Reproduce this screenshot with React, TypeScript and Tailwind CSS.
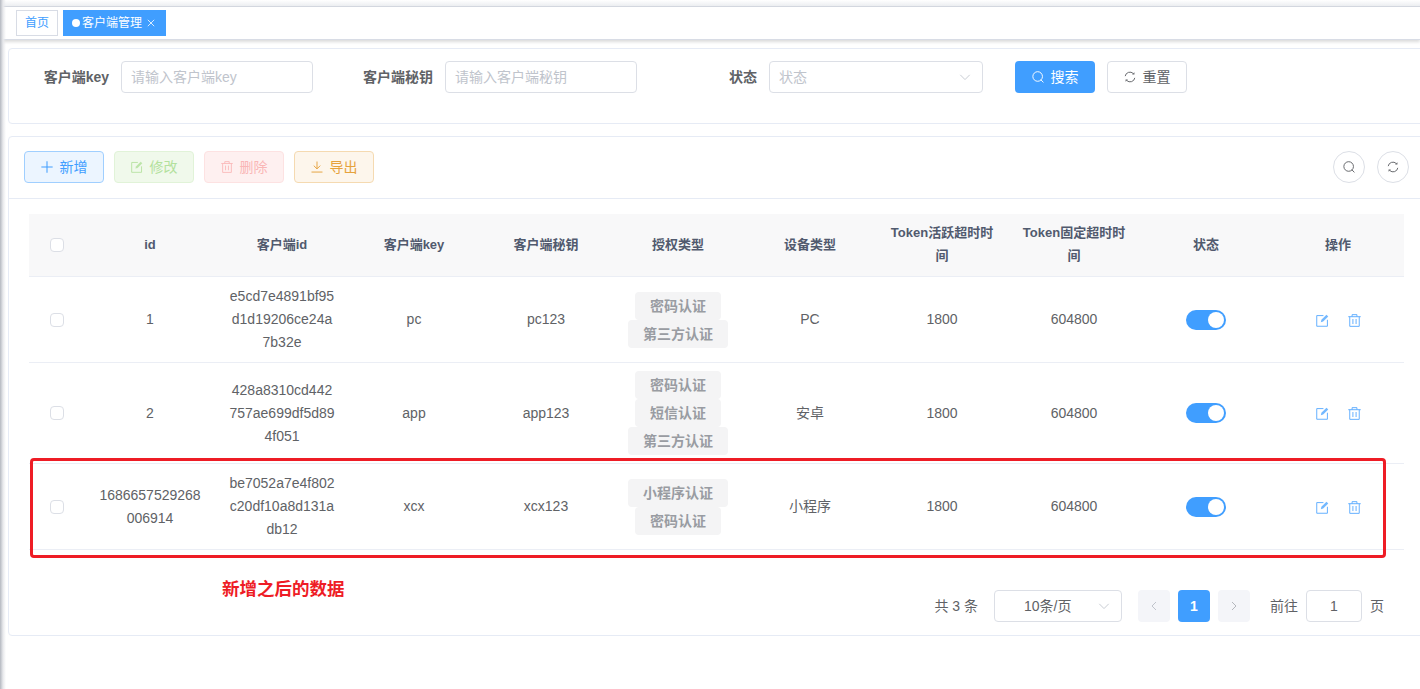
import React from "react";

const FONT = "font-['Liberation_Sans','Noto_Sans_CJK_SC',sans-serif]";

const SearchIcon = ({ className = "" }: { className?: string }) => (
  <svg viewBox="0 0 14 14" className={className} fill="none" stroke="currentColor" strokeWidth="1.1">
    <circle cx="6.6" cy="6.4" r="5.6" />
    <path d="M10.6 10.5 13 13" strokeLinecap="round" />
  </svg>
);
const RefreshIcon = ({ className = "" }: { className?: string }) => (
  <svg viewBox="0 0 14 14" className={className} fill="none" stroke="currentColor" strokeWidth="1.1">
    <path d="M1.4 6A5.6 5.6 0 0 1 10.8 2.9" />
    <path d="M12.6 8A5.6 5.6 0 0 1 3.2 11.1" />
    <path d="M12.2 1.4V4.2H9.4" fill="currentColor" stroke="none" />
    <path d="M1.8 12.6V9.8H4.6" fill="currentColor" stroke="none" />
  </svg>
);
const PlusIcon = ({ className = "" }: { className?: string }) => (
  <svg viewBox="0 0 14 14" className={className} fill="none" stroke="currentColor" strokeWidth="1.2">
    <path d="M7 .4V13.6M.4 7H13.6" />
  </svg>
);
const EditIcon = ({ className = "" }: { className?: string }) => (
  <svg viewBox="0 0 14 14" className={className} fill="none" stroke="currentColor" strokeWidth="1">
    <path d="M8 1.7H.8V13.2H12.3V6.2" />
    <path d="M5.2 8.8 5.8 6.3 11.3.8 13.2 2.7 7.7 8.2Z" fill="currentColor" stroke="none" opacity="0.85" />
  </svg>
);
const TrashIcon = ({ className = "" }: { className?: string }) => (
  <svg viewBox="0 0 14 14" className={className} fill="none" stroke="currentColor" strokeWidth="1">
    <path d="M.3 2.9H13.7" />
    <path d="M4.4 2.9V.7H9.6V2.9" />
    <path d="M1.9 2.9V13.3H12.1V2.9" />
    <path d="M5.3 5.4V10.8M8.7 5.4V10.8" />
  </svg>
);
const DownloadIcon = ({ className = "" }: { className?: string }) => (
  <svg viewBox="0 0 14 14" className={className} fill="none" stroke="currentColor" strokeWidth="1.1">
    <path d="M7 .6V9M3.2 5.4 7 9.2 10.8 5.4" />
    <path d="M.6 12.9H13.4" />
  </svg>
);
const Chevron = ({ className = "" }: { className?: string }) => (
  <svg viewBox="0 0 14 14" className={className} fill="none" stroke="currentColor" strokeWidth="1">
    <path d="M1.5 4.5 7 10 12.5 4.5" />
  </svg>
);

const Field = ({ label, labelW, inputW, placeholder, select }: { label: string; labelW: string; inputW: string; placeholder: string; select?: boolean }) => (
  <div className="flex items-center h-8">
    <div className={`${labelW} pr-3 text-right text-sm font-bold text-[#606266]`}>{label}</div>
    <div className={`${inputW} h-8 box-border border border-[#dcdfe6] rounded flex items-center justify-between pl-[9px] pr-[11px] text-sm text-[#c0c4cc]`}>
      <span>{placeholder}</span>
      {select && <Chevron className="w-3 h-3 text-[#c0c4cc]" />}
    </div>
  </div>
);

const ToolBtn = ({ label, icon, cls }: { label: string; icon: React.ReactNode; cls: string }) => (
  <div className={`w-20 h-8 box-border border rounded flex items-center justify-center gap-[7px] text-sm ${cls}`}>
    {icon}
    <span>{label}</span>
  </div>
);

const Tag = ({ t }: { t: string }) => (
  <div className="h-7 leading-7 px-[15px] rounded bg-[#f4f4f5] text-[#999ca2] text-sm font-bold w-fit mx-auto">{t}</div>
);

const Check = () => <div className="w-3.5 h-3.5 box-border border border-[#dcdfe6] rounded-sm bg-white mx-auto" />;

const rows = [
  { id: ["1"], cid: ["e5cd7e4891bf95", "d1d19206ce24a", "7b32e"], key: "pc", sec: "pc123", tags: ["密码认证", "第三方认证"], dev: "PC" },
  { id: ["2"], cid: ["428a8310cd442", "757ae699df5d89", "4f051"], key: "app", sec: "app123", tags: ["密码认证", "短信认证", "第三方认证"], dev: "安卓" },
  { id: ["1686657529268", "006914"], cid: ["be7052a7e4f802", "c20df10a8d131a", "db12"], key: "xcx", sec: "xcx123", tags: ["小程序认证", "密码认证"], dev: "小程序" },
];

const th = "text-center text-[13px] font-bold text-[#515a6e] leading-[23px] px-[10px] pt-[7px] pb-[9px] border-b border-[#ebeef5]";
const thCheck = "text-center leading-[23px] px-[10px] py-2 border-b border-[#ebeef5]";
const td = "text-center text-sm text-[#606266] leading-[23px] px-[10px] py-2 border-b border-[#ebeef5]";

export default function App() {
  return (
    <div className={`${FONT} relative w-[1420px] h-[689px] overflow-hidden bg-white`}>
      <div className="h-[7px] border-b border-[#d4d8e0] box-border bg-gradient-to-b from-white to-[#eceef1]" />
      <div className="h-[33px] box-border border-b border-[#d8dce5] shadow-[0_2px_3px_rgba(0,0,0,0.14)] flex items-center gap-[5px] pl-4 pb-px">
        <div className="w-[42px] h-[26px] box-border border border-[#d8dce5] flex items-center justify-center text-xs text-[#409eff]">首页</div>
        <div className="w-[103px] h-[26px] bg-[#409eff] flex items-center pl-[9px] text-xs text-white">
          <span className="w-2 h-2 rounded-full bg-white mr-[2px]" />
          <span>客户端管理</span>
          <svg viewBox="0 0 10 10" className="w-2 h-2 ml-[5px]" fill="none" stroke="currentColor" strokeWidth="1"><path d="M1 1 9 9M9 1 1 9" /></svg>
        </div>
      </div>

      <div className="w-[1417px] ml-2 mt-2 h-[76px] box-border border border-[#e6ebf5] rounded pt-3 pl-5">
        <div className="flex items-center">
          <Field label="客户端key" labelW="w-[92px]" inputW="w-[192px]" placeholder="请输入客户端key" />
          <Field label="客户端秘钥" labelW="w-[132px]" inputW="w-[192px]" placeholder="请输入客户端秘钥" />
          <Field label="状态" labelW="w-[132px]" inputW="w-[214px]" placeholder="状态" select />
          <div className="ml-8 w-20 h-8 rounded bg-[#409eff] flex items-center justify-center gap-[7px] text-sm text-white">
            <SearchIcon className="w-3 h-3" />
            <span>搜索</span>
          </div>
          <div className="ml-3 w-20 h-8 box-border border border-[#dcdfe6] rounded flex items-center justify-center gap-[7px] text-sm text-[#606266]">
            <RefreshIcon className="w-3 h-3" />
            <span>重置</span>
          </div>
        </div>
      </div>

      <div className="w-[1417px] ml-2 mt-3 h-[500px] box-border border border-[#e6ebf5] rounded">
        <div className="h-[62px] box-border border-b border-[#e6ebf5] pl-[15px] pr-[15px] pt-[14px] flex items-start justify-between">
          <div className="flex gap-2.5">
            <ToolBtn label="新增" icon={<PlusIcon className="w-3 h-3" />} cls="bg-[#ecf5ff] border-[#a0cfff] text-[#409eff]" />
            <ToolBtn label="修改" icon={<EditIcon className="w-3 h-3" />} cls="bg-[#f0f9eb] border-[#e1f3d8] text-[#b3e19d]" />
            <ToolBtn label="删除" icon={<TrashIcon className="w-3 h-3" />} cls="bg-[#fef0f0] border-[#fde2e2] text-[#fab6b6]" />
            <ToolBtn label="导出" icon={<DownloadIcon className="w-3 h-3" />} cls="bg-[#fdf6ec] border-[#f5dab1] text-[#e6a23c]" />
          </div>
          <div className="flex gap-3">
            <div className="w-8 h-8 box-border border border-[#dcdfe6] rounded-full flex items-center justify-center text-[#606266]"><SearchIcon className="w-3 h-3" /></div>
            <div className="w-8 h-8 box-border border border-[#dcdfe6] rounded-full flex items-center justify-center text-[#606266]"><RefreshIcon className="w-3 h-3" /></div>
          </div>
        </div>

        <div className="pl-5 pt-[15px]">
          <table className="w-[1375px] table-fixed border-collapse">
            <colgroup>
              <col className="w-[55px]" />
              {Array.from({ length: 10 }).map((_, i) => <col key={i} className="w-[132px]" />)}
            </colgroup>
            <thead>
              <tr className="bg-[#f8f8f9]">
                <th className={thCheck}><Check /></th>
                {["id", "客户端id", "客户端key", "客户端秘钥", "授权类型", "设备类型", "Token活跃超时时间", "Token固定超时时间", "状态", "操作"].map((h) => (
                  <th key={h} className={th}>{h}</th>
                ))}
              </tr>
            </thead>
            <tbody>
              {rows.map((r) => (
                <tr key={r.key}>
                  <td className={td}><Check /></td>
                  <td className={td}>{r.id.map((s) => <div key={s}>{s}</div>)}</td>
                  <td className={td}>{r.cid.map((s) => <div key={s}>{s}</div>)}</td>
                  <td className={td}>{r.key}</td>
                  <td className={td}>{r.sec}</td>
                  <td className={td}>{r.tags.map((t) => <Tag key={t} t={t} />)}</td>
                  <td className={td}>{r.dev}</td>
                  <td className={td}>1800</td>
                  <td className={td}>604800</td>
                  <td className={td}>
                    <div className="w-10 h-5 rounded-full bg-[#409eff] mx-auto flex items-center justify-end pr-0.5">
                      <span className="w-4 h-4 rounded-full bg-white" />
                    </div>
                  </td>
                  <td className={td}>
                    <div className="flex justify-center gap-[19px] text-[#5aabff] pt-px">
                      <EditIcon className="w-[13px] h-[13px]" />
                      <TrashIcon className="w-[13px] h-[13px]" />
                    </div>
                  </td>
                </tr>
              ))}
            </tbody>
          </table>

          <div className="w-[1375px] mt-10 flex items-center justify-end pr-5 text-sm text-[#606266]">
            <span className="mr-4">共 3 条</span>
            <div className="w-32 h-8 box-border border border-[#dcdfe6] rounded flex items-center pl-[29px] pr-[11px] justify-between">
              <span>10条/页</span>
              <Chevron className="w-3 h-3 text-[#c0c4cc]" />
            </div>
            <div className="ml-4 w-8 h-8 rounded-sm bg-[#f4f5f9] flex items-center justify-center text-[#c0c4cc]">
              <svg viewBox="0 0 10 10" className="w-2.5 h-2.5" fill="none" stroke="currentColor"><path d="M7 1 3 5 7 9" /></svg>
            </div>
            <div className="ml-2 w-8 h-8 rounded-sm bg-[#409eff] flex items-center justify-center text-white font-bold">1</div>
            <div className="ml-2 w-8 h-8 rounded-sm bg-[#f4f5f9] flex items-center justify-center text-[#b4b7bd]">
              <svg viewBox="0 0 10 10" className="w-2.5 h-2.5" fill="none" stroke="currentColor"><path d="M3 1 7 5 3 9" /></svg>
            </div>
            <span className="ml-5">前往</span>
            <div className="mx-2 w-14 h-8 box-border border border-[#dcdfe6] rounded flex items-center justify-center">1</div>
            <span>页</span>
          </div>
        </div>
      </div>

      <div className="absolute left-0 top-0 bottom-0 w-[6px] bg-gradient-to-r from-[#b4b8c0] via-[#e8e9ec] to-transparent" />
      <div className="absolute left-[30px] top-[458px] w-[1356px] h-[100px] box-border border-[3px] border-[#ee1c25] rounded-sm" />
      <div className="absolute left-[222px] top-[578px] text-[17.5px] leading-[22px] font-bold text-[#ee1c25]">新增之后的数据</div>
    </div>
  );
}
